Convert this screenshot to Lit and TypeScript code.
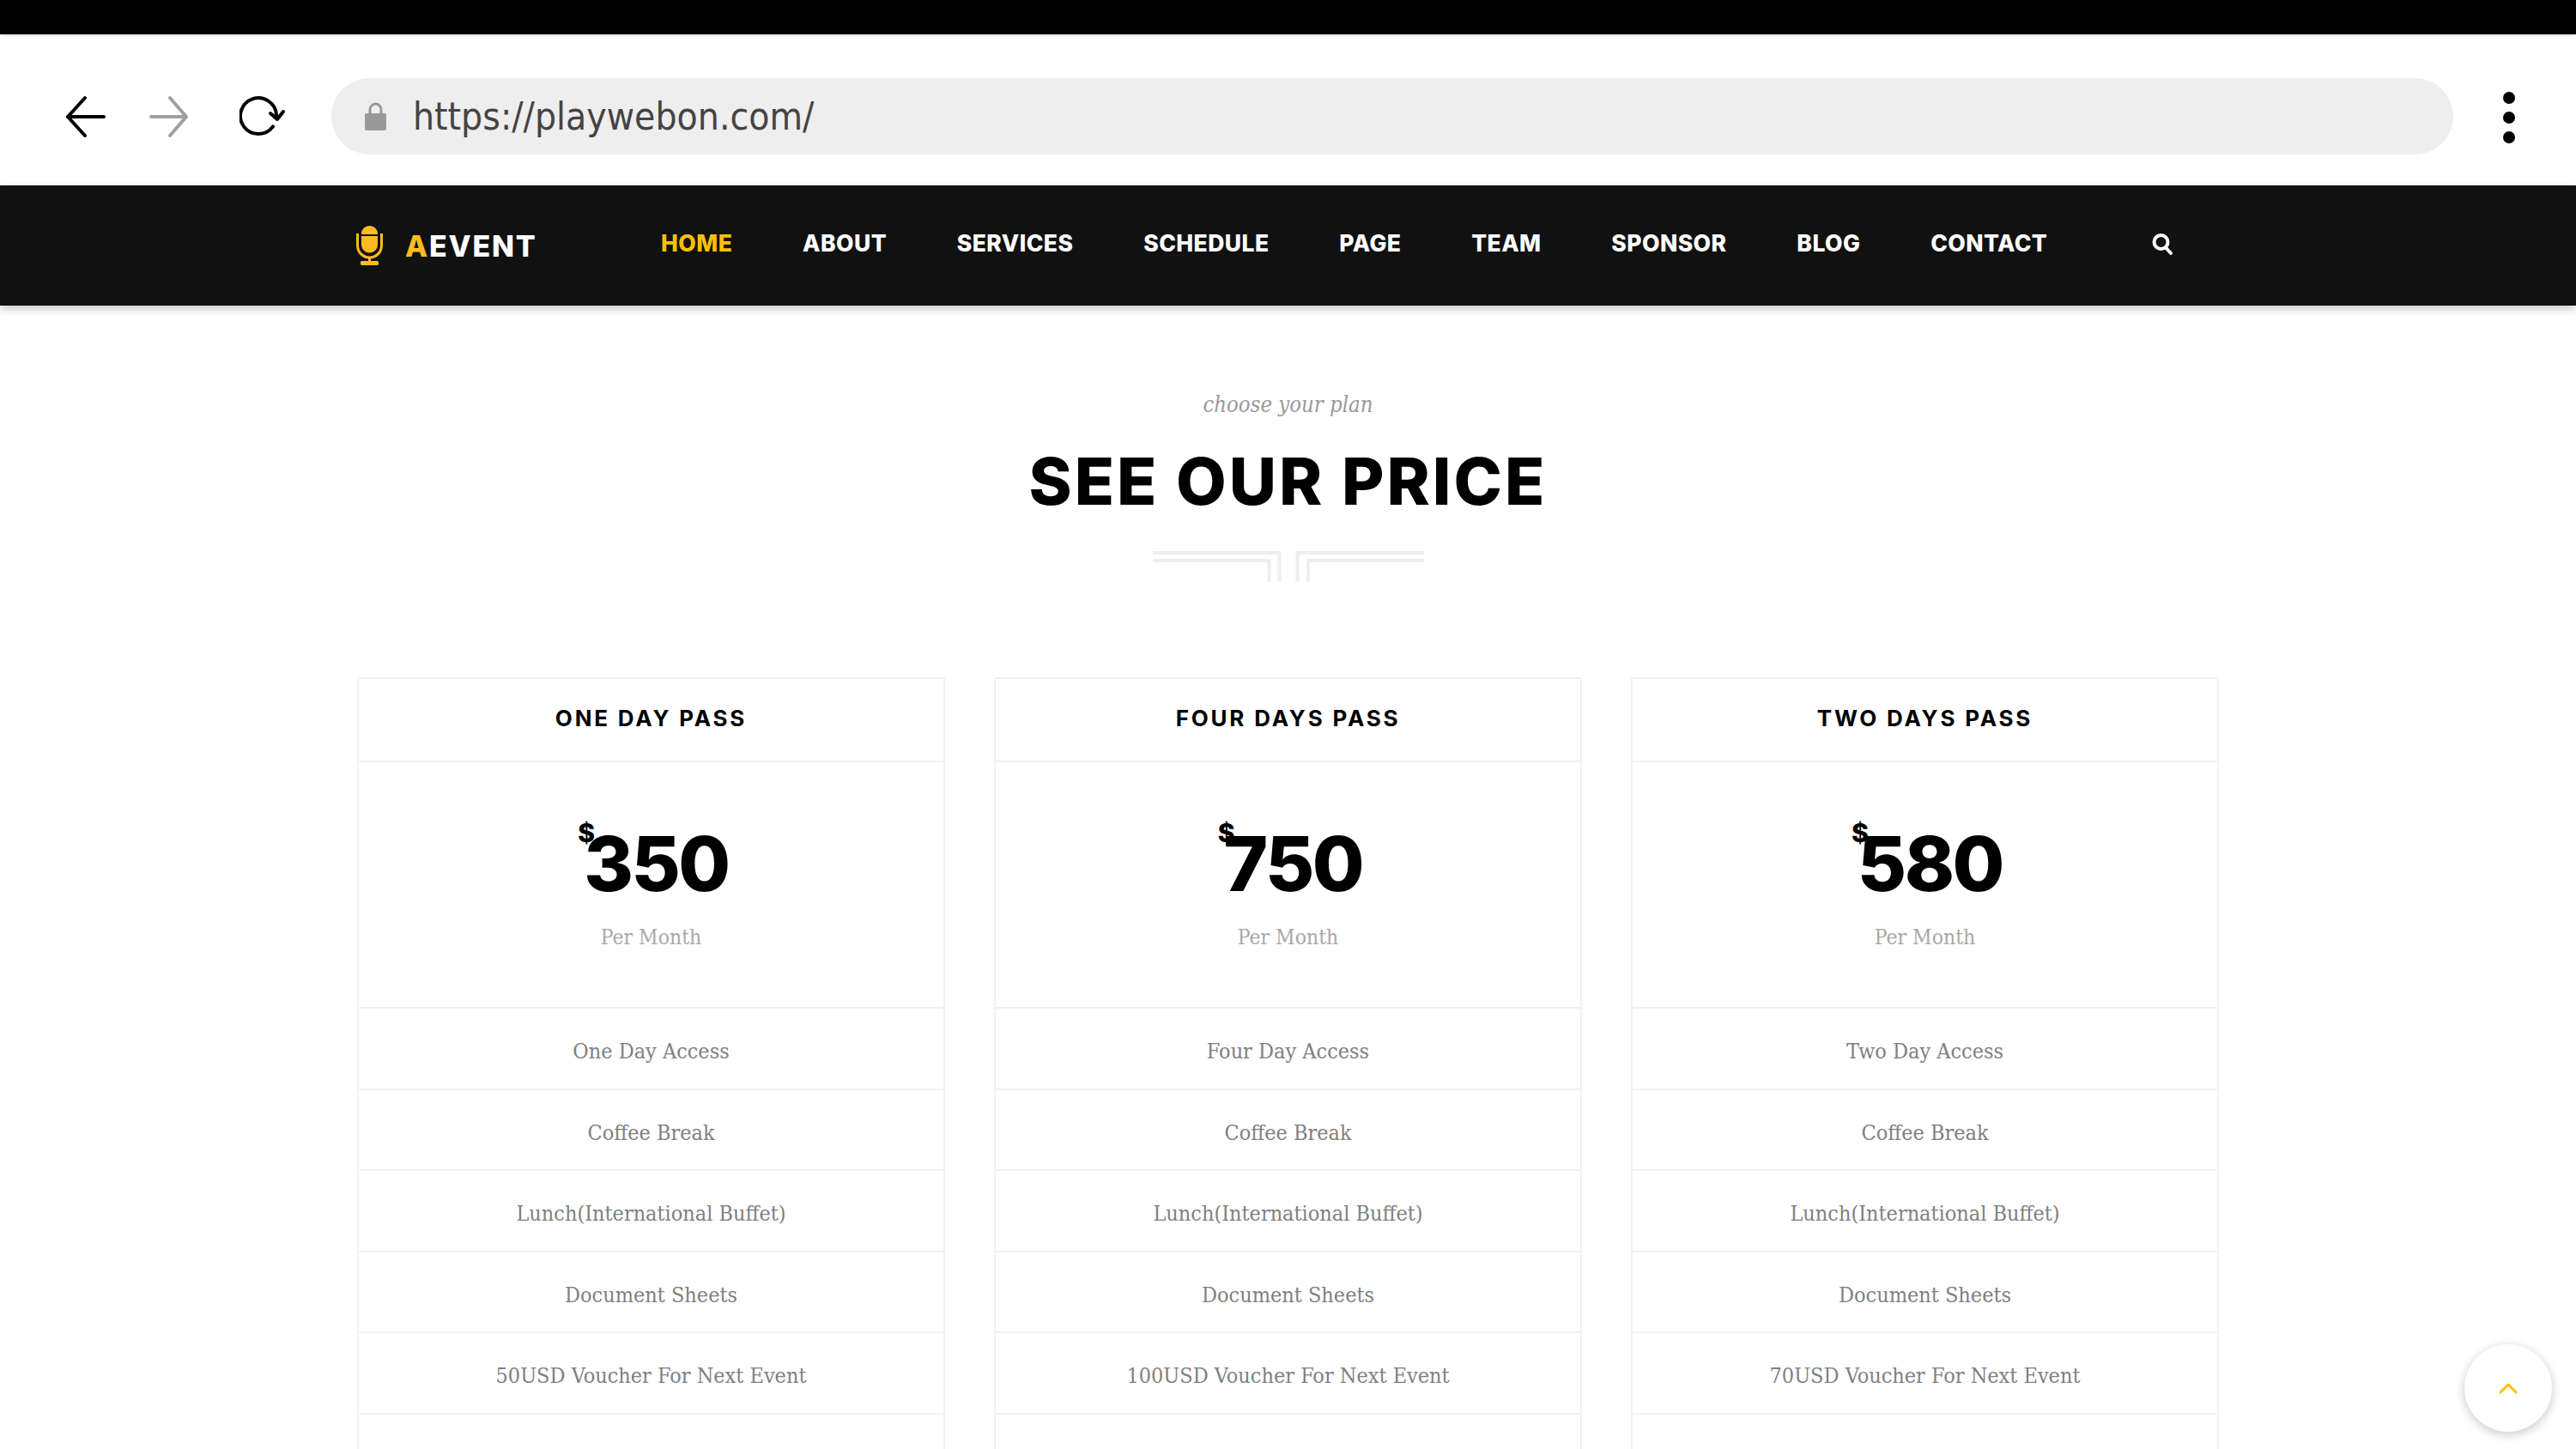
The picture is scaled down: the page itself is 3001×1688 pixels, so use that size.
import { LitElement, html, css } from "lit";
import { customElement } from "lit/decorators.js";

const NAV = ["HOME", "ABOUT", "SERVICES", "SCHEDULE", "PAGE", "TEAM", "SPONSOR", "BLOG", "CONTACT"];

const PLANS = [
  { name: "ONE DAY PASS", price: "350", access: "One Day Access", voucher: "50USD Voucher For Next Event" },
  { name: "FOUR DAYS PASS", price: "750", access: "Four Day Access", voucher: "100USD Voucher For Next Event" },
  { name: "TWO DAYS PASS", price: "580", access: "Two Day Access", voucher: "70USD Voucher For Next Event" },
];

@customElement("app-root")
export class AppRoot extends LitElement {
  static styles = css`
    :host {
      display: block;
      position: relative;
      height: 1688px;
      overflow: hidden;
      background: #fff;
      font-family: "Inter", sans-serif;
    }

    .status {
      position: relative;
      height: 40px;
      background: #000;
      box-shadow: 0 1px 4px rgba(0, 0, 0, 0.18);
    }

    .toolbar {
      height: 176px;
      box-sizing: border-box;
      padding-top: 15px;
      display: flex;
      align-items: center;
      background: #fff;
    }

    .toolbar svg {
      display: block;
      flex: none;
    }

    .back { margin-left: 76px; }
    .forward { margin-left: 46px; }
    .reload { margin-left: 57px; }

    .omnibox {
      margin-left: 51px;
      width: 2472px;
      height: 89px;
      border-radius: 45px;
      background: #eee;
      display: flex;
      align-items: center;
      box-sizing: border-box;
      padding-left: 39px;
    }

    .url {
      margin-left: 31px;
      font-family: "DejaVu Sans", sans-serif;
      font-stretch: condensed;
      font-size: 44px;
      color: #444;
      white-space: nowrap;
    }

    .kebab {
      margin-left: 58px;
      margin-top: 3px;
    }

    .nav {
      position: relative;
      height: 140px;
      background: #111;
      display: flex;
      align-items: center;
      padding-left: 415px;
      box-shadow: 0 4px 10px rgba(0, 0, 0, 0.22);
    }

    .logo {
      display: flex;
      align-items: center;
      width: 355px;
      flex: none;
    }

    .logo-text {
      margin-left: 26px;
      font-size: 34px;
      font-weight: 800;
      letter-spacing: 1.8px;
      color: #fff;
    }

    .logo-text span {
      color: #fdbb22;
    }

    .menu {
      display: flex;
      gap: 81.8px;
      margin-top: -7px;
      font-size: 26.5px;
      font-weight: 800;
      letter-spacing: 0.45px;
      color: #fff;
    }

    .menu .active {
      color: #fcc000;
    }

    .search {
      margin-left: 122px;
      margin-top: -5px;
    }

    .section {
      text-align: center;
    }

    .kicker {
      margin-top: 97px;
      font-family: "DejaVu Serif", "Liberation Serif", serif;
      font-stretch: condensed;
      font-style: italic;
      font-size: 25.5px;
      line-height: 36px;
      color: #999;
    }

    h2 {
      margin: 26px 0 0;
      font-size: 76px;
      line-height: 90px;
      font-weight: 800;
      letter-spacing: 3px;
      color: #000;
    }

    .ornament {
      display: block;
      margin: 37px auto 0;
    }

    .cards {
      margin: 111px 416px 0;
      display: grid;
      grid-template-columns: repeat(3, 1fr);
      gap: 57px;
    }

    .card {
      border: 2px solid #f1f1f1;
      border-bottom: none;
      text-align: center;
    }

    .card-title {
      height: 95px;
      line-height: 91px;
      font-size: 26px;
      font-weight: 700;
      letter-spacing: 2.8px;
      color: #000;
      border-bottom: 2px solid #f1f1f1;
    }

    .card-price {
      height: 287px;
      box-sizing: border-box;
      border-bottom: 2px solid #f1f1f1;
      padding-top: 65px;
    }

    .amount {
      display: flex;
      justify-content: center;
      padding-left: 5px;
      font-size: 88px;
      line-height: 106px;
      font-weight: 800;
      letter-spacing: -2.5px;
      color: #000;
    }

    .currency {
      margin-right: -13px;
      font-size: 30px;
      line-height: 34px;
      font-weight: 800;
      letter-spacing: 0;
    }

    .period {
      margin-top: 16px;
      font-family: "DejaVu Serif", "Liberation Serif", serif;
      font-stretch: condensed;
      font-size: 24.5px;
      line-height: 34px;
      color: #a8a8a8;
    }

    .feature {
      height: 94.6px;
      box-sizing: border-box;
      border-bottom: 2px solid #f1f1f1;
      overflow: hidden;
      font-family: "DejaVu Serif", "Liberation Serif", serif;
      font-stretch: condensed;
      font-size: 25px;
      line-height: 100px;
      color: #808080;
    }

    .to-top {
      position: absolute;
      left: 2871px;
      top: 1566px;
      width: 102px;
      height: 102px;
      border-radius: 50%;
      background: #fff;
      box-shadow: 0 3px 12px rgba(0, 0, 0, 0.22);
      display: flex;
      align-items: center;
      justify-content: center;
    }
  `;

  render() {
    return html`
      <div class="status"></div>
      <div class="toolbar">
        <svg class="back" width="50" height="52" viewBox="0 0 50 52" fill="none" stroke="#000" stroke-width="4" stroke-linecap="round" stroke-linejoin="round">
          <path d="M23 4 L3 26 L23 48" />
          <path d="M3 26 H45" />
        </svg>
        <svg class="forward" width="50" height="52" viewBox="0 0 50 52" fill="none" stroke="#a0a0a0" stroke-width="4" stroke-linecap="round" stroke-linejoin="round">
          <path d="M26 4 L45 26 L26 48" />
          <path d="M4 26 H45" />
        </svg>
        <svg class="reload" width="56" height="52" viewBox="0 0 56 52" fill="none" stroke="#000" stroke-width="4" stroke-linecap="round" stroke-linejoin="round">
          <path d="M39 37.4 A21 21 0 1 1 43 24" />
          <path d="M36 22 L44 29 L51 20" />
        </svg>
        <div class="omnibox">
          <svg width="25" height="33" viewBox="0 0 25 33">
            <path d="M6 14 V9 A6.5 7 0 0 1 19 9 V14" fill="none" stroke="#999" stroke-width="3" />
            <rect x="0" y="13" width="25" height="20" rx="2" fill="#999" />
          </svg>
          <span class="url">https://playwebon.com/</span>
        </div>
        <svg class="kebab" width="14" height="60" viewBox="0 0 14 60" fill="#000">
          <ellipse cx="7" cy="7" rx="7" ry="7" />
          <ellipse cx="7" cy="30" rx="7" ry="7" />
          <ellipse cx="7" cy="53" rx="7" ry="7" />
        </svg>
      </div>
      <div class="nav">
        <div class="logo">
          <svg width="31" height="46" viewBox="0 0 31 46" fill="#fdbb22">
            <path d="M6 9 A9.5 9 0 0 1 25 9 V10 H6 Z" />
            <path d="M6 12 H25 V22 A9.5 9.5 0 0 1 6 22 Z" />
            <path d="M1.5 9 V23 A14 14 0 0 0 29.5 23 V9" fill="none" stroke="#fdbb22" stroke-width="3" />
            <rect x="14" y="36" width="3" height="6" />
            <rect x="5" y="41" width="21" height="5" rx="1.5" />
          </svg>
          <div class="logo-text"><span>A</span>EVENT</div>
        </div>
        <div class="menu">
          ${NAV.map((n, i) => html`<div class=${i === 0 ? "active" : ""}>${n}</div>`)}
        </div>
        <svg class="search" width="24" height="26" viewBox="0 0 24 26" fill="none" stroke="#fff" stroke-linecap="round">
          <circle cx="10.5" cy="11" r="8" stroke-width="4" />
          <path d="M16.5 18 L22 24" stroke-width="4" />
        </svg>
      </div>
      <div class="section">
        <div class="kicker">choose your plan</div>
        <h2>SEE OUR PRICE</h2>
        <svg class="ornament" width="316" height="36" viewBox="0 0 316 36" fill="none" stroke="#eee" stroke-width="4">
          <path d="M0 2 H147.5 V36" />
          <path d="M0 11 H135.5 V36" />
          <path d="M316 2 H168.5 V36" />
          <path d="M316 11 H181 V36" />
        </svg>
      </div>
      <div class="cards">
        ${PLANS.map(
          (p) => html`
            <div class="card">
              <div class="card-title">${p.name}</div>
              <div class="card-price">
                <div class="amount"><span class="currency">$</span><span>${p.price}</span></div>
                <div class="period">Per Month</div>
              </div>
              <div class="feature">${p.access}</div>
              <div class="feature">Coffee Break</div>
              <div class="feature">Lunch(International Buffet)</div>
              <div class="feature">Document Sheets</div>
              <div class="feature">${p.voucher}</div>
              <div class="feature"></div>
            </div>
          `
        )}
      </div>
      <div class="to-top">
        <svg width="22" height="14" viewBox="0 0 22 14" fill="none" stroke="#fcc000" stroke-width="3" stroke-linecap="round" stroke-linejoin="round">
          <path d="M2 12 L11 3 L20 12" />
        </svg>
      </div>
    `;
  }
}
